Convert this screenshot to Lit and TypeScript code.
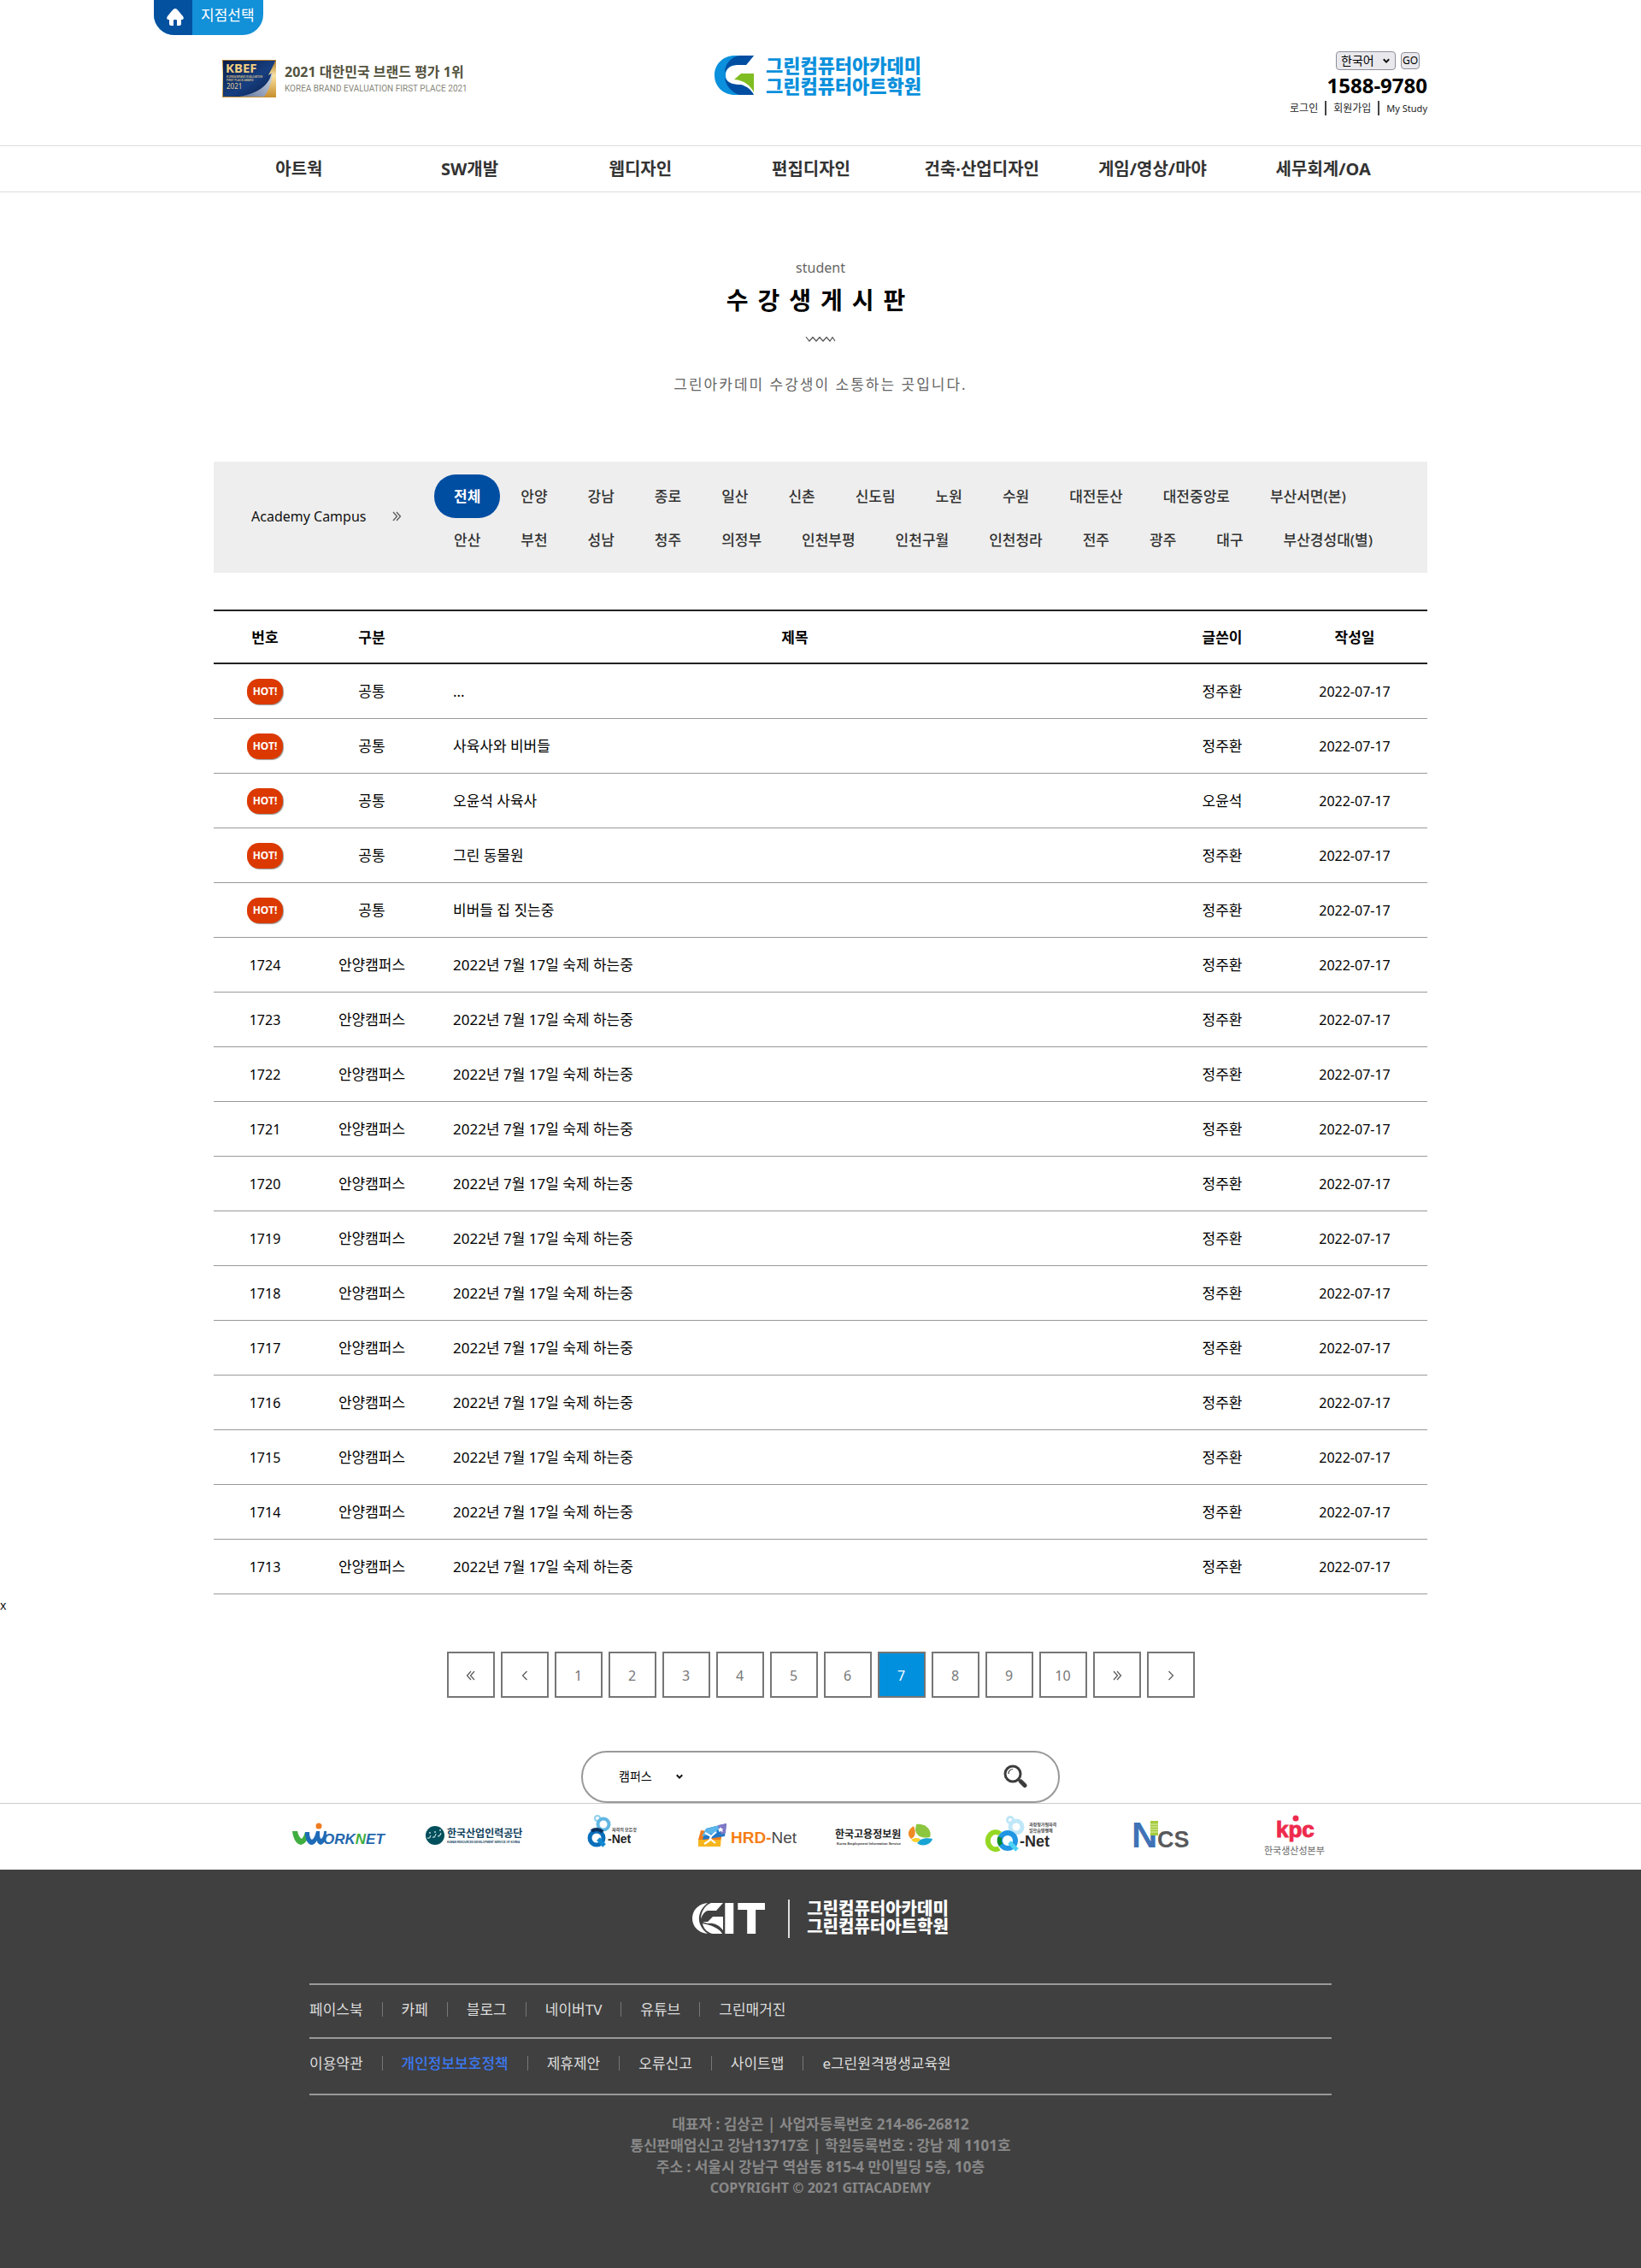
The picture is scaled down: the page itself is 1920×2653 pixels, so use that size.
import { LitElement, html, svg, css } from "lit";
import { customElement, state } from "lit/decorators.js";
import { classMap } from "lit/directives/class-map.js";

interface Post {
  no: string;
  group: string;
  title: string;
  author: string;
  date: string;
}

const MENU = ["아트웍", "SW개발", "웹디자인", "편집디자인", "건축·산업디자인", "게임/영상/마야", "세무회계/OA"];

const CAMPUS_ROWS = [
  ["전체", "안양", "강남", "종로", "일산", "신촌", "신도림", "노원", "수원", "대전둔산", "대전중앙로", "부산서면(본)"],
  ["안산", "부천", "성남", "청주", "의정부", "인천부평", "인천구월", "인천청라", "전주", "광주", "대구", "부산경성대(별)"],
];

const DATE = "2022-07-17";
const NOTICES: Post[] = [
  ["...", "정주환"],
  ["사육사와 비버들", "정주환"],
  ["오윤석 사육사", "오윤석"],
  ["그린 동물원", "정주환"],
  ["비버들 집 짓는중", "정주환"],
].map(([title, author]) => ({ no: "", group: "공통", title, author, date: DATE }));

const POSTS: Post[] = Array.from({ length: 12 }, (_, i) => ({
  no: String(1724 - i),
  group: "안양캠퍼스",
  title: "2022년 7월 17일 숙제 하는중",
  author: "정주환",
  date: DATE,
}));

const SNS = ["페이스북", "카페", "블로그", "네이버TV", "유튜브", "그린매거진"];
const POLICY = ["이용약관", "개인정보보호정책", "제휴제안", "오류신고", "사이트맵", "e그린원격평생교육원"];

const chevron = (paths: string[], label: string) => html`
  <svg class="arrow" viewBox="0 0 12 12" role="img" aria-label=${label}>
    ${paths.map((d) => svg`<path d=${d} />`)}
  </svg>
`;
const FIRST = ["M6 1 L1.5 6 L6 11", "M10 1 L5.5 6 L10 11"];
const PREV = ["M8.5 1 L3.5 6 L8.5 11"];
const LAST = ["M2 1 L6.5 6 L2 11", "M6 1 L10.5 6 L6 11"];
const NEXT = ["M3.5 1 L8.5 6 L3.5 11"];

const down = html`<svg class="down" viewBox="0 0 8 8" aria-hidden="true"><path d="M0.8 2.2 L4 5.6 L7.2 2.2" /></svg>`;

const PARTNERS = [
  {
    name: "WORKNET",
    art: svg`
      <path d="M22 32 L28 32 C29 37 31 40 33 41 C35 39 36 36 37 33 L42 33 C41 40 38 47 32 48 C26 47 23 40 22 32Z" fill="#3fae3f"/>
      <path d="M37 33 L42 33 C42 38 43 41 45 42 C48 40 49 36 50 32 L54 32 C54 37 54 40 56 41 C58 39 59 36 59 32 L62 32 C62 40 60 47 55 48 C52 47 51 45 51 43 C49 46 47 48 44 48 C40 47 37 42 37 33Z" fill="#1e6bb8"/>
      <circle cx="53" cy="26" r="3.500" fill="#ef7b22"/>
      <text x="58" y="47" class="sans b i" font-size="17" fill="#2467ae">ORK<tspan fill="#3fae3f">N</tspan>ET</text>`,
  },
  {
    name: "한국산업인력공단",
    art: svg`
      <circle cx="29" cy="37" r="11" fill="#004f5c"/>
      <path d="M20 40 q3 1 4-3 M26 39 q3 1 4-4 M32 38 q3 0 4-4" fill="none" stroke="#b8d6da" stroke-width="1.200"/>
      <g fill="#b8d6da"><circle cx="23" cy="34" r="1"/><circle cx="29" cy="33" r="1"/><circle cx="35" cy="31" r="1"/></g>
      <text x="43" y="39" class="b" font-size="12" fill="#12415c">한국산업인력공단</text>
      <text x="43" y="46" class="narrow b" font-size="3" fill="#12415c">HUMAN RESOURCES DEVELOPMENT SERVICE OF KOREA</text>`,
  },
  {
    name: "Q-Net",
    art: svg`
      <circle cx="59" cy="17" r="3" fill="none" stroke="#8ed0ee" stroke-width="2"/>
      <circle cx="66" cy="24" r="6.500" fill="none" stroke="#62b7e2" stroke-width="4"/>
      <circle cx="58" cy="40" r="8" fill="none" stroke="#0a6fbb" stroke-width="5"/>
      <path d="M52 32 a10 10 0 0 1 13 1" fill="none" stroke="#0b2f5e" stroke-width="4"/>
      <path d="M60 41 L67 49" stroke="#1388cf" stroke-width="5"/>
      <text x="71" y="46" class="narrow b" font-size="14" fill="#222">-Net</text>
      <text x="76" y="32" class="b" font-size="5" fill="#444">자격의 모든것</text>`,
  },
  {
    name: "HRD-Net",
    art: svg`
      <path d="M17 41 L44 38 L43 50 L17 50 Z" fill="#f6b51d"/>
      <path d="M20 31 L46 34 L43 42 L17 42 Z" fill="#f07c1c"/>
      <path d="M26 29 L50 23 L48 38 L22 42 Z" fill="#2178c7"/>
      <path d="M26 29 L42 25 L38 34 L21 38 Z" fill="#59b5ea"/>
      <path d="M40 25 L50 23 L49 34 L44 36 Z" fill="#7f78c6"/>
      <path d="M25 34 L32 38 L38 33 M32 38 L30 43 L24 47 M31 41 L37 46" fill="none" stroke="#fff" stroke-width="2.200"/>
      <path d="M43 27 l1 2 2 0 -1 2 1 2 -3-1 -2 1 0-2 -1-2 2 0z" fill="#fff"/>
      <text x="55" y="46" class="sans b" font-size="19" fill="#f57e16">HRD-<tspan class="r" fill="#484848">Net</tspan></text>`,
  },
  {
    name: "한국고용정보원",
    art: svg`
      <text x="17" y="40" class="b" font-size="12" fill="#222">한국고용정보원</text>
      <text x="19" y="48" class="narrow b" font-size="4" fill="#333">Korea Employment Information Service</text>
      <path d="M112 24 C124 22 131 32 128 39 C119 41 112 38 111 30 Z" fill="#8cc63f"/>
      <path d="M109 26 C102 30 101 37 106 41 C111 39 112 33 109 26 Z" fill="#f08a24"/>
      <path d="M106 42 C111 39 116 40 117 42 C115 46 109 46 106 42 Z" fill="#fbcf2d"/>
      <path d="M117 42 C121 40 127 40 131 41 C129 48 119 51 113 46 Z" fill="#17a4d4"/>`,
  },
  {
    name: "CQ-Net",
    art: svg`
      <circle cx="62" cy="19" r="3.500" fill="none" stroke="#bfe7f8" stroke-width="3"/>
      <circle cx="69" cy="27" r="7" fill="none" stroke="#bfe7f8" stroke-width="5"/>
      <path d="M50 35 A9 10 0 1 0 49 52" fill="none" stroke="#95d824" stroke-width="6"/>
      <circle cx="59" cy="43" r="9" fill="none" stroke="#2196e3" stroke-width="6"/>
      <path d="M50 39 a9 9 0 0 0 1 9" fill="none" stroke="#0d8a2c" stroke-width="5"/>
      <path d="M61 45 L70 54" stroke="#4fd3f5" stroke-width="5"/>
      <text x="73" y="50" class="narrow b" font-size="18" fill="#2b2b2b">-Net</text>
      <text x="84" y="26" class="b" font-size="5" fill="#444">과정평가형자격</text>
      <text x="84" y="33" class="b" font-size="5" fill="#444">일학습병행제</text>`,
  },
  {
    name: "NCS",
    art: svg`
      <text x="44" y="51" class="sans b" font-size="42" fill="#3f72b6">N</text>
      <path d="M66 20 h9 v17 h-9z" fill="#a5cb3c"/>
      <path d="M66 24 h9 M66 27 h9 M66 30 h9 M66 33 h9" stroke="#e1efb8" stroke-width="1"/>
      <text x="74" y="51" class="sans b" font-size="27" fill="#58595b">CS</text>`,
  },
  {
    name: "kpc 한국생산성본부",
    art: svg`
      <text x="53" y="39" class="sans b" font-size="26" fill="#ee2b4d" stroke="#ee2b4d">kpc</text>
      <circle cx="76" cy="17" r="3.500" fill="#ee2b4d"/>
      <text x="39" y="59" font-size="11" fill="#666">한국생산성본부</text>`,
  },
];

@customElement("app-root")
export class AppRoot extends LitElement {
  @state() private campus = "전체";
  @state() private page = 7;

  static styles = css`
    :host {
      display: block;
      background: #fff;
      color: #111;
      font: 17px/24px "Noto Sans", "Noto Sans CJK KR", sans-serif;
    }
    * { box-sizing: border-box; }
    a { color: inherit; text-decoration: none; }
    button, select, input { font: inherit; color: inherit; margin: 0; }
    button { cursor: pointer; }
    ul { list-style: none; margin: 0; padding: 0; }
    .wrap { width: 100%; max-width: 1420px; margin: 0 auto; }
    svg { display: block; }
    svg text { font-family: "Noto Sans", "Noto Sans CJK KR", sans-serif; }
    svg .sans { font-family: "Liberation Sans", sans-serif; }
    svg .narrow { font-family: "Liberation Sans Narrow", "Liberation Sans", sans-serif; }
    svg .heavy { font-family: Inter, sans-serif; font-weight: 900; }
    svg .b { font-weight: 700; }
    svg .r { font-weight: 400; }
    svg .i { font-style: italic; }

    .topbar { max-width: 1560px; margin: 0 auto; }
    .branch {
      display: inline-flex;
      height: 41px;
      overflow: hidden;
      border-radius: 0 0 24px 24px;
      background: #1290d8;
      color: #fff;
      vertical-align: top;
    }
    .branch-icon { width: 45px; background: #0451a0; padding: 10px 0 0 15px; }
    .branch-icon svg { width: 20px; height: 20px; }
    .branch-text { padding: 6px 10px 0; }

    .masthead {
      display: grid;
      grid-template-columns: 1fr auto 1fr;
      align-items: start;
      height: 129px;
      padding-top: 19px;
    }
    .award { display: flex; gap: 10px; padding: 10px 0 0 10px; }
    .award svg { width: 63px; height: 44px; }
    .award-title { font-size: 16px; line-height: 28px; font-weight: 700; color: #54543f; margin: 0; }
    .award-sub { font: 10px/12px "Liberation Sans Narrow", Roboto, sans-serif; color: #87877a; margin: 0; }
    .brand { display: flex; gap: 14px; align-items: center; padding: 4px 6px 0 0; }
    .brand svg { width: 46px; height: 46px; }
    .wordmark { font-weight: 900; font-size: 22px; line-height: 24px; color: #0a90dc; }
    .wordmark span { display: block; }
    .util { display: flex; flex-direction: column; align-items: flex-end; }
    .lang { display: flex; align-items: center; gap: 6px; padding-right: 9px; font-size: 14px; }
    .pick { display: grid; align-items: center; }
    .pick > * { grid-area: 1 / 1; }
    .pick select { appearance: none; cursor: pointer; }
    .pick .down { justify-self: end; pointer-events: none; }
    .down { width: 8px; height: 8px; fill: none; stroke: #111; stroke-width: 2; }
    .lang select {
      width: 70px; height: 22px; padding: 0 5px; line-height: 18px;
      border: 1px solid #8f8f9d; border-radius: 4px; background: #e9e9ed; color: #000;
    }
    .lang .down { margin-right: 7px; }
    .go {
      width: 22px; height: 20px; padding: 0; line-height: 18px; font-size: 12px;
      border: 1px solid #8f8f9d; border-radius: 4px; background: #e9e9ed; color: #000;
    }
    .phone { font-size: 24px; line-height: 36px; font-weight: 700; color: #000; margin: 0; }
    .member { display: flex; font-size: 12px; line-height: 17px; color: #222; }
    .member li + li { border-left: 2px solid #444; padding-left: 8px; }
    .member li { padding-right: 8px; }
    .member li:last-child { padding-right: 0; font-size: 11px; }

    .menu { border: 1px solid #ddd; border-width: 1px 0; }
    .menu ul { display: flex; padding-right: 22px; }
    .menu li { flex: 1; text-align: center; }
    .menu a { display: block; font-size: 20px; line-height: 53px; font-weight: 700; color: #333; }

    .intro { text-align: center; padding-top: 76px; color: #666; }
    .intro-en { font-size: 16px; line-height: 24px; margin: 0; }
    .intro h1 { margin: 6px 0 0; font-size: 28px; line-height: 40px; font-weight: 700; letter-spacing: 11px; color: #000; }
    .intro svg { width: 36px; height: 8px; margin: 22px auto 0; }
    .intro-desc { margin: 37px 0 0; line-height: 24px; letter-spacing: 2px; }

    .campus { display: flex; margin-top: 78px; background: #eee; height: 130px; }
    .campus-label { display: flex; align-items: center; justify-content: space-between; width: 176px; margin-left: 44px; margin-bottom: 3px; }
    .campus-label span { font-size: 16px; }
    .arrow { width: 12px; height: 12px; fill: none; stroke: #555; stroke-width: 1.2; }
    .campus-rows { margin-left: 38px; padding-top: 15px; }
    .campus-rows ul { display: flex; gap: 1px; }
    .campus-rows button {
      height: 51px; padding: 0 23px; border: 0; border-radius: 25px; background: none;
      font-weight: 500; color: #333; white-space: nowrap;
    }
    .campus-rows button.on { background: #004ea2; color: #fff; font-weight: 700; }

    table { width: 100%; margin-top: 43px; border-collapse: collapse; table-layout: fixed; }
    .c-no { width: 120px; }
    .c-group { width: 130px; }
    .c-author { width: 140px; }
    .c-date { width: 170px; }
    th { height: 62px; padding: 2px 0 0; border: 2px solid #222; border-width: 2px 0; font-weight: 700; color: #000; }
    td { height: 64px; padding: 2px 0 0; border-bottom: 1px solid #999; text-align: center; color: #000; }
    td.num { font-size: 16px; }
    td.title { text-align: left; padding-left: 30px; }
    .hot {
      display: inline-block; width: 42px; height: 30px; border-radius: 14px; background: #dc3900; color: #fff;
      box-shadow: 1px 1px 1px #999; font-size: 12px; line-height: 30px; font-weight: 700; vertical-align: middle;
    }
    .stray { margin: 0; font-size: 14px; line-height: 25px; }

    .pages { display: flex; justify-content: center; gap: 7px; padding-top: 42px; }
    .pages button {
      display: flex; align-items: center; justify-content: center;
      width: 56px; height: 54px; padding: 2px 0 0; border: 2px solid #767676; background: #fff; font-size: 16px; color: #777;
    }
    .pages button.on { background: #0090dd; color: #fff; }
    .search {
      display: flex; align-items: center; width: 560px; max-width: 100%; height: 61px; margin: 62px auto 0; padding: 0 36px 0 40px;
      border: 2px solid #999; border-radius: 30px; background: #fff; font-size: 14px;
    }
    .search .pick { width: 80px; }
    .search select { border: 0; padding: 0 0 0 2px; background: none; color: #000; width: 80px; height: 30px; }
    .search .down { margin-right: 3px; }
    .search input { flex: 1; min-width: 0; height: 40px; border: 0; outline: 0; background: none; padding: 0 16px; }
    .search button { border: 0; background: none; padding: 0; }
    .search button svg { width: 28px; height: 28px; }

    .partners { border-top: 1px solid #ccc; }
    .partners ul { display: flex; max-width: 1280px; margin: 0 auto; }
    .partners li { flex: 1; }
    .partners svg { width: 100%; height: 77px; }

    footer { background: #404040; color: #ddd; padding: 35px 0 94px; }
    .foot-brand { display: flex; justify-content: center; align-items: center; height: 45px; }
    .git { width: 96px; height: 76px; }
    .foot-brand .wordmark { font-size: 20px; line-height: 21px; color: #fff; border-left: 2px solid #ddd; margin-left: 16px; padding: 0 0 3px 20px; }
    .foot-nav { max-width: 1196px; margin: 53px auto 0; border-top: 2px solid #999; }
    .foot-nav ul { display: flex; align-items: center; height: 63px; border-bottom: 2px solid #999; padding-bottom: 3px; }
    .foot-nav ul + ul { height: 66px; padding-bottom: 6px; }
    .foot-nav li { display: flex; align-items: center; }
    .foot-nav li + li::before { content: ""; width: 1px; height: 17px; margin: 0 22px; background: #777; }
    .foot-nav .key { color: #3b78f0; font-weight: 500; }
    address { margin-top: 21px; text-align: center; font-style: normal; font-weight: 700; line-height: 25px; color: #888; }
    address span { display: block; }
    address .copy { font-size: 16px; }
  `;

  private wordmark() {
    return html`<div class="wordmark"><span>그린컴퓨터아카데미</span><span>그린컴퓨터아트학원</span></div>`;
  }

  private row(p: Post) {
    return html`<tr>
      <td class="num">${p.no || html`<span class="hot">HOT!</span>`}</td>
      <td>${p.group}</td>
      <td class="title"><a href="#">${p.title}</a></td>
      <td>${p.author}</td>
      <td class="num">${p.date}</td>
    </tr>`;
  }

  render() {
    return html`
      <div class="topbar">
        <a class="branch" href="#">
          <span class="branch-icon">
            <svg viewBox="0 0 20 20" aria-hidden="true">
              <path d="M10 0 C12 0 14 3 19 9 C21 12 19 13 17 13 L17 18 Q17 20 15 20 L12 20 L12 14 Q12 13 11 13 L9 13 Q8 13 8 14 L8 20 L5 20 Q3 20 3 18 L3 13 C1 13 -1 12 1 9 C6 3 8 0 10 0Z" fill="#fff" />
            </svg>
          </span>
          <span class="branch-text">지점선택</span>
        </a>
      </div>

      <header class="wrap masthead">
        <div class="award">
          <svg viewBox="0 0 63 44" aria-hidden="true">
            <defs>
              <linearGradient id="navy" x1="0" y1="0" x2="1" y2="1"><stop offset="0" stop-color="#0a1c48" /><stop offset=".55" stop-color="#173f80" /><stop offset="1" stop-color="#0a1a45" /></linearGradient>
              <linearGradient id="gold" x1="0" y1="0" x2="0" y2="1"><stop offset="0" stop-color="#b07c28" /><stop offset=".4" stop-color="#fbe2a0" /><stop offset="1" stop-color="#c8912f" /></linearGradient>
              <linearGradient id="silver" x1="0" y1="1" x2="1" y2="0"><stop offset="0" stop-color="#5c7199" /><stop offset="1" stop-color="#eef1f7" /></linearGradient>
            </defs>
            <rect width="63" height="44" fill="url(#gold)" />
            <rect x="1" y="1" width="61" height="42" fill="url(#navy)" />
            <path d="M20 43 C40 40 54 30 57 18 L62 2 V43Z" fill="url(#silver)" />
            <path d="M49 43 C55 35 58 25 59 15 L54 18 L62 2 V43Z" fill="url(#gold)" />
            <text x="4" y="15" class="b" font-size="15" fill="#f3cf80">KBEF</text>
            <text x="5" y="21" class="narrow b" font-size="3" fill="#c8b98c">KOREA BRAND EVALUATION</text>
            <text x="5" y="25" class="narrow b" font-size="3" fill="#c8b98c">FIRST PLACE AWARD</text>
            <text x="5" y="34" font-size="8" fill="#e4cf98">2021</text>
          </svg>
          <div>
            <p class="award-title">2021 대한민국 브랜드 평가 1위</p>
            <p class="award-sub">KOREA BRAND EVALUATION FIRST PLACE 2021</p>
          </div>
        </div>
        <a class="brand" href="#">
          <svg viewBox="0 0 46 46" aria-hidden="true">
            <path d="M46 0 L37 11 L27 11 C17 11 13 17 13 23 C13 30 19 34 27 38 L46 46 L24 46 C10 46 0 36 0 23 C0 10 10 0 24 0Z" fill="#0a90dc" />
            <path d="M46 0 L37 11 L26 11 C19 11 15 14 12 20 C12 10 19 2 29 0Z" fill="#004ea2" />
            <path d="M12 26 C16 33 24 34 31 34 C38 36 43 40 46 46 L29 46 C20 43 13 35 12 26Z" fill="#004ea2" />
            <path d="M23 28 L31 21 L46 21 L46 43 C42 35 35 29 23 28Z" fill="#80bd22" />
          </svg>
          ${this.wordmark()}
        </a>
        <div class="util">
          <div class="lang">
            <span class="pick">
              <select aria-label="언어"><option>한국어</option></select>${down}
            </span>
            <button class="go">GO</button>
          </div>
          <p class="phone">1588-9780</p>
          <ul class="member">
            <li><a href="#">로그인</a></li>
            <li><a href="#">회원가입</a></li>
            <li><a href="#">My Study</a></li>
          </ul>
        </div>
      </header>

      <nav class="menu">
        <ul class="wrap">${MENU.map((m) => html`<li><a href="#">${m}</a></li>`)}</ul>
      </nav>

      <main>
        <section class="intro">
          <p class="intro-en">student</p>
          <h1>수강생게시판</h1>
          <svg viewBox="0 0 36 8" aria-hidden="true">
            <path d="M1 1 L5 6 L9 1.500 L13 6 L17 1.500 L21 6 L25 1.500 L29 6 L32 1.500 L35 6" fill="none" stroke="#555" stroke-width="1.200" />
          </svg>
          <p class="intro-desc">그린아카데미 수강생이 소통하는 곳입니다.</p>
        </section>

        <section class="wrap campus">
          <div class="campus-label"><span>Academy Campus</span>${chevron(LAST, "캠퍼스")}</div>
          <div class="campus-rows">
            ${CAMPUS_ROWS.map(
              (row) => html`<ul>
                ${row.map(
                  (c) => html`<li>
                    <button class=${classMap({ on: c === this.campus })} @click=${() => (this.campus = c)}>${c}</button>
                  </li>`
                )}
              </ul>`
            )}
          </div>
        </section>

        <div class="wrap">
          <table>
            <colgroup>
              <col class="c-no" /><col class="c-group" /><col /><col class="c-author" /><col class="c-date" />
            </colgroup>
            <thead>
              <tr><th>번호</th><th>구분</th><th>제목</th><th>글쓴이</th><th>작성일</th></tr>
            </thead>
            <tbody>${[...NOTICES, ...POSTS].map((p) => this.row(p))}</tbody>
          </table>
        </div>
        <p class="stray">x</p>

        <nav class="pages" aria-label="페이지">
          <button>${chevron(FIRST, "처음")}</button>
          <button>${chevron(PREV, "이전")}</button>
          ${Array.from({ length: 10 }, (_, i) => i + 1).map(
            (n) => html`<button class=${classMap({ on: n === this.page })} @click=${() => (this.page = n)}>${n}</button>`
          )}
          <button>${chevron(LAST, "마지막")}</button>
          <button>${chevron(NEXT, "다음")}</button>
        </nav>

        <form class="search" @submit=${(e: Event) => e.preventDefault()}>
          <span class="pick">
            <select aria-label="검색 구분"><option>캠퍼스</option></select>${down}
          </span>
          <input type="text" aria-label="검색어" />
          <button aria-label="검색">
            <svg viewBox="0 0 28 28" aria-hidden="true">
              <circle cx="11" cy="11" r="9" fill="none" stroke="#3c3c3c" stroke-width="3" />
              <path d="M6 11 A5 5 0 0 1 11 5.500" fill="none" stroke="#3c3c3c" stroke-width="1.200" />
              <path d="M17.500 17.500 L20 20" stroke="#3c3c3c" stroke-width="3" />
              <path d="M20.500 20 L25 24.500" stroke="#3c3c3c" stroke-width="5" stroke-linecap="round" />
            </svg>
          </button>
        </form>
      </main>

      <section class="partners">
        <ul>
          ${PARTNERS.map(
            (p) => html`<li><a href="#" aria-label=${p.name}><svg viewBox="0 0 160 77">${p.art}</svg></a></li>`
          )}
        </ul>
      </section>

      <footer>
        <div class="foot-brand">
          <svg class="git" viewBox="0 -18 96 76" aria-hidden="true">
            <path d="M18 2 C-6 4 -6 36 18 38 C4 28 5 12 18 2Z" fill="#fff" />
            <path d="M36 2 L28 11 L18 11 C14 12 11 17 10 21 C10 13 14 5 22 2Z" fill="#fff" />
            <path d="M12 24 L18 24 L24 18 L36 18 L36 34 C31 27 24 25 18 26Z" fill="#fff" />
            <path d="M12 26 C22 28 31 31 35 38 L24 38 C18 37 13 32 12 26Z" fill="#fff" />
            <text x="36" y="38" font-size="50" class="heavy" fill="#fff">I<tspan x="52">T</tspan></text>
          </svg>
          ${this.wordmark()}
        </div>
        <nav class="foot-nav">
          <ul>${SNS.map((s) => html`<li><a href="#">${s}</a></li>`)}</ul>
          <ul>${POLICY.map((s, i) => html`<li><a href="#" class=${classMap({ key: i === 1 })}>${s}</a></li>`)}</ul>
        </nav>
        <address>
          <span>대표자 : 김상곤 | 사업자등록번호 214-86-26812</span>
          <span>통신판매업신고 강남13717호 | 학원등록번호 : 강남 제 1101호</span>
          <span>주소 : 서울시 강남구 역삼동 815-4 만이빌딩 5층, 10층</span>
          <span class="copy">COPYRIGHT © 2021 GITACADEMY</span>
        </address>
      </footer>
    `;
  }
}
